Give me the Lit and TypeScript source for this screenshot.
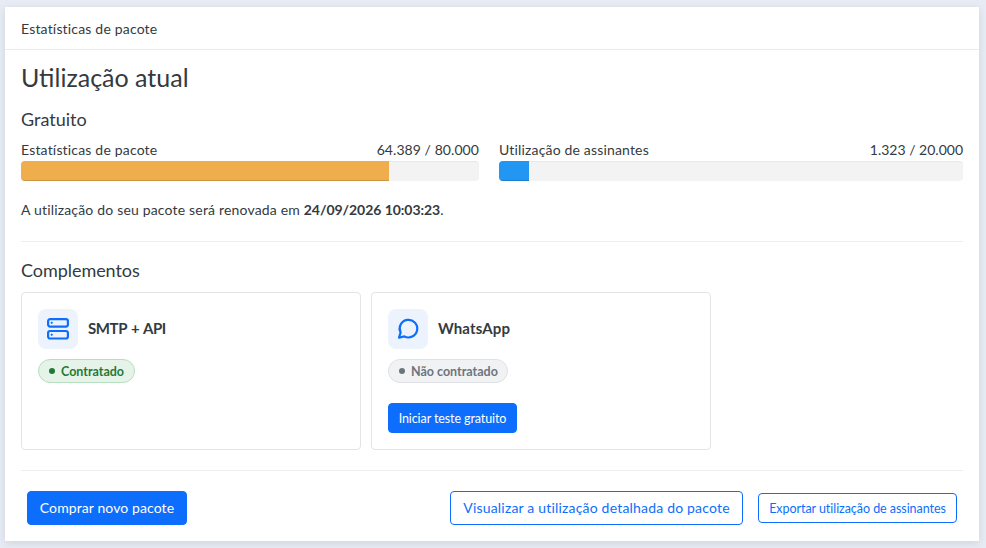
import { LitElement, html, css } from "lit";
import { customElement } from "lit/decorators.js";

@customElement("app-root")
export class AppRoot extends LitElement {
  static styles = css`
    :host { display: block; box-sizing: border-box; height: 548px; padding: 7px 7px 7px 5px; background: #e7ebf3;
      font-family: "Lato", "Noto Sans", sans-serif; color: #343a40; font-size: 14px; overflow: hidden; }
    * { box-sizing: border-box; }
    .card { background: #fff; height: 534px; box-shadow: 0 2px 8px rgba(0,0,0,.1); }
    .head { height: 43px; padding: 0 16px; border-bottom: 1px solid #e9ebee; display: flex; align-items: center; font-size: 14px; letter-spacing: .18px; }
    .body { padding: 0 16px; }
    h1 { margin: 0; font-weight: 400; font-size: 25px; line-height: 30px; padding-top: 12px; }
    h2 { margin: 0; font-weight: 400; font-size: 18px; line-height: 22px; }
    .plan { padding-top: 16px; }
    .bars { display: grid; grid-template-columns: 458px 464px; gap: 20px; padding-top: 10px; }
    .lab { display: flex; justify-content: space-between; line-height: 20px; height: 21px; }
    .t1 { letter-spacing: .18px; }
    .t2 { letter-spacing: .17px; }
    .v1 { letter-spacing: .07px; }
    .track { height: 20px; background: #f3f3f3; border-radius: 4px; overflow: hidden; box-shadow: inset 0 1px 1px rgba(0,0,0,.05); }
    .fill { height: 100%; box-shadow: inset 0 -1px 0 rgba(0,0,0,.15); }
    .orange { background: #f0ad4e; }
    .blue { background: #2196f3; }
    .renew { margin: 0; padding-top: 19px; line-height: 20px; letter-spacing: .18px; }
    .renew b { font-weight: 700; letter-spacing: -.05px; }
    hr { margin: 0; border: 0; border-top: 1px solid #eceef0; }
    .h1 { margin-top: 21px; }
    .addons-t { padding: 17px 0 1px; letter-spacing: -.05px; }
    .grid { display: grid; grid-template-columns: repeat(3, 340px); gap: 10px; padding-top: 10px; }
    .addon { height: 158px; border: 1px solid #e2e4e8; border-radius: 4px; padding: 16px; display: flex; flex-direction: column; align-items: flex-start; }
    .top { display: flex; align-items: center; gap: 10px; }
    .ico { width: 40px; height: 40px; border-radius: 8px; background: #edf3fc; display: flex; align-items: center; justify-content: center; }
    .name { font-weight: 700; font-size: 15px; padding-bottom: 2px; }
    .n1 { letter-spacing: -.4px; word-spacing: 1px; }
    .n2 { letter-spacing: .12px; }
    .badge { margin-top: 10px; height: 24px; border-radius: 12px; border: 1px solid; padding: 0 10px; display: inline-flex; align-items: center; gap: 6px; font-size: 12.5px; font-weight: 700; }
    .dot { width: 6px; height: 6px; border-radius: 50%; background: currentColor; }
    .on { background: #e5f3e8; border-color: #b5dfc0; color: #1f7a35; }
    .off { background: #f1f2f4; border-color: #dfe1e5; color: #6c757d; padding-right: 9px; }
    .btn { border: 1px solid #0d6efd; border-radius: 4px; font: inherit; display: inline-flex; align-items: center; justify-content: center; padding: 0; }
    .pri { background: #0d6efd; color: #fff; }
    .out { background: #fff; color: #0d6efd; }
    .sm { font-size: 12.5px; height: 30px; }
    .try { margin-top: 20px; width: 129px; letter-spacing: -.1px; }
    .foot { display: flex; justify-content: space-between; align-items: center; padding: 20px 6px 0; }
    .right { display: flex; gap: 15px; align-items: center; }
    .lg { height: 34px; padding-bottom: 2px; }
    .buy { width: 160px; letter-spacing: .1px; }
    .view { width: 293px; letter-spacing: .19px; }
    .exp { width: 199px; letter-spacing: -.05px; }
  `;

  render() {
    return html`<div class="card">
      <div class="head">Estatísticas de pacote</div>
      <div class="body">
        <h1>Utilização atual</h1>
        <h2 class="plan">Gratuito</h2>
        <div class="bars">
          <div>
            <div class="lab"><span class="t1">Estatísticas de pacote</span><span class="v1">64.389 / 80.000</span></div>
            <div class="track"><div class="fill orange" style="width:80.4%"></div></div>
          </div>
          <div>
            <div class="lab"><span class="t2">Utilização de assinantes</span><span>1.323 / 20.000</span></div>
            <div class="track"><div class="fill blue" style="width:6.4%"></div></div>
          </div>
        </div>
        <p class="renew">A utilização do seu pacote será renovada em <b>24/09/2026 10:03:23</b>.</p>
        <hr class="h1" />
        <h2 class="addons-t">Complementos</h2>
        <div class="grid">
          <div class="addon">
            <div class="top">
              <div class="ico">
                <svg width="24" height="24" viewBox="0 0 24 24" fill="none" stroke="#0d6efd" stroke-width="2.2">
                  <rect x="2.1" y="2.1" width="19.8" height="7.5" rx="2"/><rect x="2.1" y="14" width="19.8" height="7.5" rx="2"/>
                  <circle cx="5.7" cy="5.8" r=".7" fill="#0d6efd" stroke-width="1"/><circle cx="5.7" cy="17.7" r=".7" fill="#0d6efd" stroke-width="1"/>
                </svg>
              </div>
              <span class="name n1">SMTP + API</span>
            </div>
            <span class="badge on"><i class="dot"></i>Contratado</span>
          </div>
          <div class="addon">
            <div class="top">
              <div class="ico">
                <svg width="24" height="24" viewBox="0 0 24 24" fill="none" stroke="#0d6efd" stroke-width="2.2" stroke-linejoin="round">
                  <path d="M8.3 19.4A8.8 8.8 0 1 0 4.6 15.6L3 20.7Z"/>
                </svg>
              </div>
              <span class="name n2">WhatsApp</span>
            </div>
            <span class="badge off"><i class="dot"></i>Não contratado</span>
            <button class="btn pri sm try">Iniciar teste gratuito</button>
          </div>
        </div>
        <hr style="margin-top:20px" />
        <div class="foot">
          <button class="btn pri lg buy">Comprar novo pacote</button>
          <div class="right">
            <button class="btn out lg view">Visualizar a utilização detalhada do pacote</button>
            <button class="btn out sm exp">Exportar utilização de assinantes</button>
          </div>
        </div>
      </div>
    </div>`;
  }
}
